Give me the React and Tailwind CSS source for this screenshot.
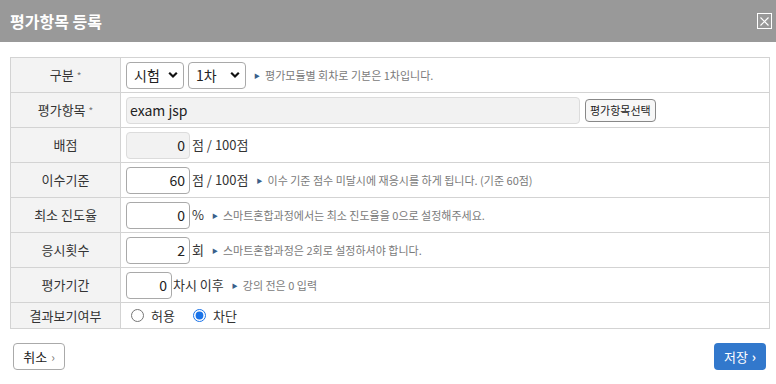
import React, { useState } from 'react';

const Hint = ({ children }) => (
    <span className="ml-2 inline-flex items-center text-[11px] text-[#7a7a7a]">
        <span className="mr-[5px] text-[6px] text-[#3a5f8a]">▶</span>
        {children}
    </span>
);

const Chevron = () => (
    <svg className="pointer-events-none absolute right-[6px] top-1/2 -translate-y-1/2" width="10" height="7" viewBox="0 0 10 7">
        <path d="M1.2 1.3 L5 5 L8.8 1.3" fill="none" stroke="#111" strokeWidth="2.2" />
    </svg>
);

const Select = ({ value, options, width }) => (
    <div className={`relative ${width}`}>
        <select
            defaultValue={value}
            className="h-[27px] w-full appearance-none rounded-[4px] border border-[#a9a9a9] bg-white pl-[7px] text-[14px] text-[#222] outline-none"
        >
            {options.map((o) => (
                <option key={o}>{o}</option>
            ))}
        </select>
        <Chevron />
    </div>
);

const NumInput = ({ value, width = 'w-[64px]', disabled }) => (
    <input
        type="text"
        defaultValue={value}
        disabled={disabled}
        className={`h-[27px] ${width} rounded-[4px] border pr-[4px] text-right text-[14px] text-[#222] outline-none ${disabled ? 'border-[#dcdcdc] bg-[#f2f2f2]' : 'border-[#a9a9a9] bg-white'}`}
    />
);

const Row = ({ label, req, children, last }) => (
    <tr className={last ? 'h-[26px]' : 'h-[35px]'}>
        <th className="w-[110px] border border-[#d3d3d3] bg-[#f3f3f3] text-center text-[13px] font-normal text-[#333]">
            {label}
            {req && <span className="ml-[3px] text-[10px] text-[#777]">*</span>}
        </th>
        <td className="border border-[#d3d3d3] pl-[5px] text-[13px] text-[#333]">
            <div className="flex items-center">{children}</div>
        </td>
    </tr>
);

const App = () => {
    const [result, setResult] = useState('block');

    return (
        <div className="h-[384px] w-[776px] bg-white" style={{ fontFamily: '"Noto Sans CJK KR", "Noto Sans", sans-serif' }}>
            {/* header */}
            <div className="flex h-[42px] items-center justify-between bg-[#999999] pl-[10px] pr-[4px]">
                <h1 className="text-[16px] font-bold text-white">평가항목 등록</h1>
                <button className="flex h-[16px] w-[15px] items-center justify-center border border-white">
                    <svg width="9" height="9" viewBox="0 0 9 9">
                        <path d="M0.5 0.5 L8.5 8.5 M8.5 0.5 L0.5 8.5" stroke="#fff" strokeWidth="1.2" />
                    </svg>
                </button>
            </div>

            <div className="px-[10px] pt-[15px]">
                <table className="w-[760px] border-collapse">
                    <tbody>
                        <Row label="구분" req>
                            <Select value="시험" options={['시험', '과제']} width="w-[58px]" />
                            <div className="ml-[4px]">
                                <Select value="1차" options={['1차', '2차', '3차']} width="w-[58px]" />
                            </div>
                            <Hint>평가모듈별 회차로 기본은 1차입니다.</Hint>
                        </Row>
                        <Row label="평가항목" req>
                            <input
                                type="text"
                                readOnly
                                defaultValue="exam jsp"
                                className="h-[27px] w-[454px] rounded-[4px] border border-[#dcdcdc] bg-[#f2f2f2] pl-[3px] text-[14px] text-[#222] outline-none"
                            />
                            <button className="ml-[5px] h-[23px] rounded-[4px] border border-[#888] bg-[#f7f7f7] px-[4px] text-[11px] text-[#222]">
                                평가항목선택
                            </button>
                        </Row>
                        <Row label="배점">
                            <NumInput value="0" disabled />
                            <span className="ml-[2px]">점 / 100점</span>
                        </Row>
                        <Row label="이수기준">
                            <NumInput value="60" />
                            <span className="ml-[2px]">점 / 100점</span>
                            <Hint>이수 기준 점수 미달시에 재응시를 하게 됩니다. (기준 60점)</Hint>
                        </Row>
                        <Row label="최소 진도율">
                            <NumInput value="0" />
                            <span className="ml-[2px]">%</span>
                            <Hint>스마트혼합과정에서는 최소 진도율을 0으로 설정해주세요.</Hint>
                        </Row>
                        <Row label="응시횟수">
                            <NumInput value="2" />
                            <span className="ml-[2px]">회</span>
                            <Hint>스마트혼합과정은 2회로 설정하셔야 합니다.</Hint>
                        </Row>
                        <Row label="평가기간">
                            <NumInput value="0" width="w-[46px]" />
                            <span className="ml-[1px]">차시 이후</span>
                            <Hint>강의 전은 0 입력</Hint>
                        </Row>
                        <Row label="결과보기여부" last>
                            <label className="ml-[5px] flex items-center gap-[7px]">
                                <input
                                    type="radio"
                                    name="result"
                                    checked={result === 'allow'}
                                    onChange={() => setResult('allow')}
                                    className="m-0 h-[13px] w-[13px] accent-[#1a73e8]"
                                />
                                허용
                            </label>
                            <label className="ml-[18px] flex items-center gap-[7px]">
                                <input
                                    type="radio"
                                    name="result"
                                    checked={result === 'block'}
                                    onChange={() => setResult('block')}
                                    className="m-0 h-[13px] w-[13px] accent-[#1a73e8]"
                                />
                                차단
                            </label>
                        </Row>
                    </tbody>
                </table>

                {/* footer buttons */}
                <div className="mt-[14px] flex items-center justify-between pl-[3px]">
                    <button className="flex h-[27px] w-[52px] items-center justify-center gap-[4px] rounded-[4px] border border-[#aaa] bg-white text-[13px] text-[#222]">
                        취소 <span className="text-[12px] text-[#777]">›</span>
                    </button>
                    <button className="flex h-[27px] w-[52px] items-center justify-center gap-[4px] rounded-[4px] bg-[#3278cc] text-[13px] text-white">
                        저장 <span className="text-[13px] font-bold">›</span>
                    </button>
                </div>
            </div>
        </div>
    );
};

export default App;
